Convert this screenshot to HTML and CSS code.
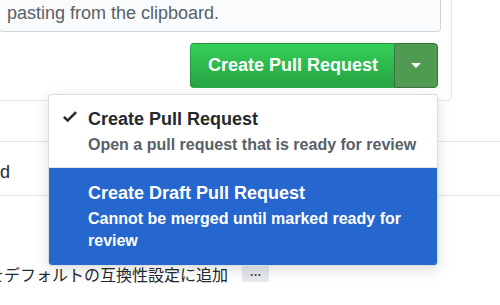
FILE: index.html
```html
<!DOCTYPE html>
<html lang="ja">
<head>
	<meta charset="UTF-8">
	<title>Create Pull Request</title>
	<link rel="stylesheet" href="styles.css">
</head>
<body>
	<div class="page">
		<div class="composer">
			<div class="write-box">pasting from the clipboard.</div>
			<div class="form-actions">
				<div class="btn-group">
					<button class="btn-primary">Create Pull Request</button>
					<button class="btn-caret"><span class="caret"></span></button>

					<!-- 下拉菜单 -->
					<div class="select-menu">
						<div class="menu-item">
							<svg class="check" width="14" height="19" viewBox="0 0 12 16">
								<path d="M12 5l-8 8-4-4 1.5-1.5L4 10l6.5-6.5L12 5z" fill="#24292e"/>
							</svg>
							<div class="menu-text">
								<div class="menu-title">Create Pull Request</div>
								<div class="menu-desc">Open a pull request that is ready for review</div>
							</div>
						</div>
						<div class="menu-item active">
							<span class="check"></span>
							<div class="menu-text">
								<div class="menu-title">Create Draft Pull Request</div>
								<div class="menu-desc">Cannot be merged until marked ready for review</div>
							</div>
						</div>
					</div>
				</div>
			</div>
		</div>

		<div class="row">d</div>

		<div class="compat">
			<span class="compat-text">をデフォルトの互換性設定に追加</span>
			<span class="expander">…</span>
		</div>
	</div>
</body>
</html>
```

FILE: styles.css
```css
*{
	padding: 0;
	margin: 0;
	box-sizing: border-box;
}
html, body{
	width: 500px;
	height: 305px;
	overflow: hidden;
	background: #fff;
}
body{
	font-family: "Liberation Sans", Arial, sans-serif;
	color: #24292e;
}
.page{
	width: 500px;
}

/* 评论输入框 */
.composer{
	margin: -12px 48px 0 -12px;
	padding: 0 10px 12px 10px;
	border: 1px solid #e1e4e8;
	border-radius: 4px;
}
.write-box{
	margin-top: -1px;
	padding: 13px 8px 6px 7px;
	background-color: #fafbfc;
	border: 1px solid #d1d5da;
	border-top: none;
	border-radius: 0 0 4px 4px;
	font-size: 18px;
	line-height: 24px;
	color: #586069;
}
.form-actions{
	display: flex;
	justify-content: flex-end;
	margin-top: 11px;
	padding-right: 3px;
}

/* 按钮组 */
.btn-group{
	display: flex;
	position: relative;
}
.btn-primary, .btn-caret{
	font-family: inherit;
	height: 45px;
	cursor: pointer;
}
.btn-primary{
	padding: 0 16px 0 17px;
	font-size: 18px;
	font-weight: bold;
	color: #fff;
	background-image: linear-gradient(-180deg, #34d058 0%, #28a745 90%);
	border: 1px solid rgba(27, 31, 35, 0.2);
	border-right: none;
	border-radius: 4px 0 0 4px;
}
.btn-caret{
	width: 44px;
	display: flex;
	align-items: center;
	justify-content: center;
	background-color: #4f9b51;
	border: 1px solid #3d7340;
	border-radius: 0 4px 4px 0;
}
.caret{
	width: 0;
	height: 0;
	border-top: 5px solid #fff;
	border-left: 5px solid transparent;
	border-right: 5px solid transparent;
}

/* 下拉菜单 */
.select-menu{
	position: absolute;
	top: calc(100% + 6px);
	right: 0;
	width: 390px;
	background-color: #fff;
	border: 1px solid rgba(27, 31, 35, 0.15);
	border-radius: 4px;
	box-shadow: 0 4px 14px rgba(27, 31, 35, 0.15);
	overflow: hidden;
	z-index: 10;
}
.menu-item{
	display: flex;
	padding: 12px 16px 11px 14px;
	border-bottom: 1px solid #e1e4e8;
}
.menu-item .check{
	flex: none;
	width: 14px;
	height: 19px;
	margin-right: 11px;
}
.menu-title{
	font-size: 18px;
	font-weight: bold;
	line-height: 24px;
	color: #24292e;
}
.menu-desc{
	margin-top: 3px;
	font-size: 16px;
	font-weight: bold;
	line-height: 22px;
	color: #586069;
}
.menu-item.active{
	padding-top: 13px;
	padding-bottom: 13px;
	background-color: #2666cf;
	border-bottom: none;
}
.menu-item.active .menu-title,
.menu-item.active .menu-desc{
	color: #fff;
}

/* 下方的列表 */
.row{
	margin-top: 40px;
	padding: 18px 0 11px;
	border-top: 1px solid #e1e4e8;
	border-bottom: 1px solid #e1e4e8;
	font-size: 18px;
	line-height: 24px;
}
.compat{
	margin: 66px 0 0 -12px;
	display: flex;
	align-items: center;
}
.compat-text{
	font-family: "Noto Sans CJK JP", sans-serif;
	font-size: 16px;
	line-height: 24px;
	color: #24292e;
}
.expander{
	margin-left: 14px;
	width: 27px;
	height: 16px;
	background-color: #e6e8eb;
	border-radius: 2px;
	font-size: 12px;
	font-weight: bold;
	line-height: 12px;
	text-align: center;
	color: #444d56;
}
```
